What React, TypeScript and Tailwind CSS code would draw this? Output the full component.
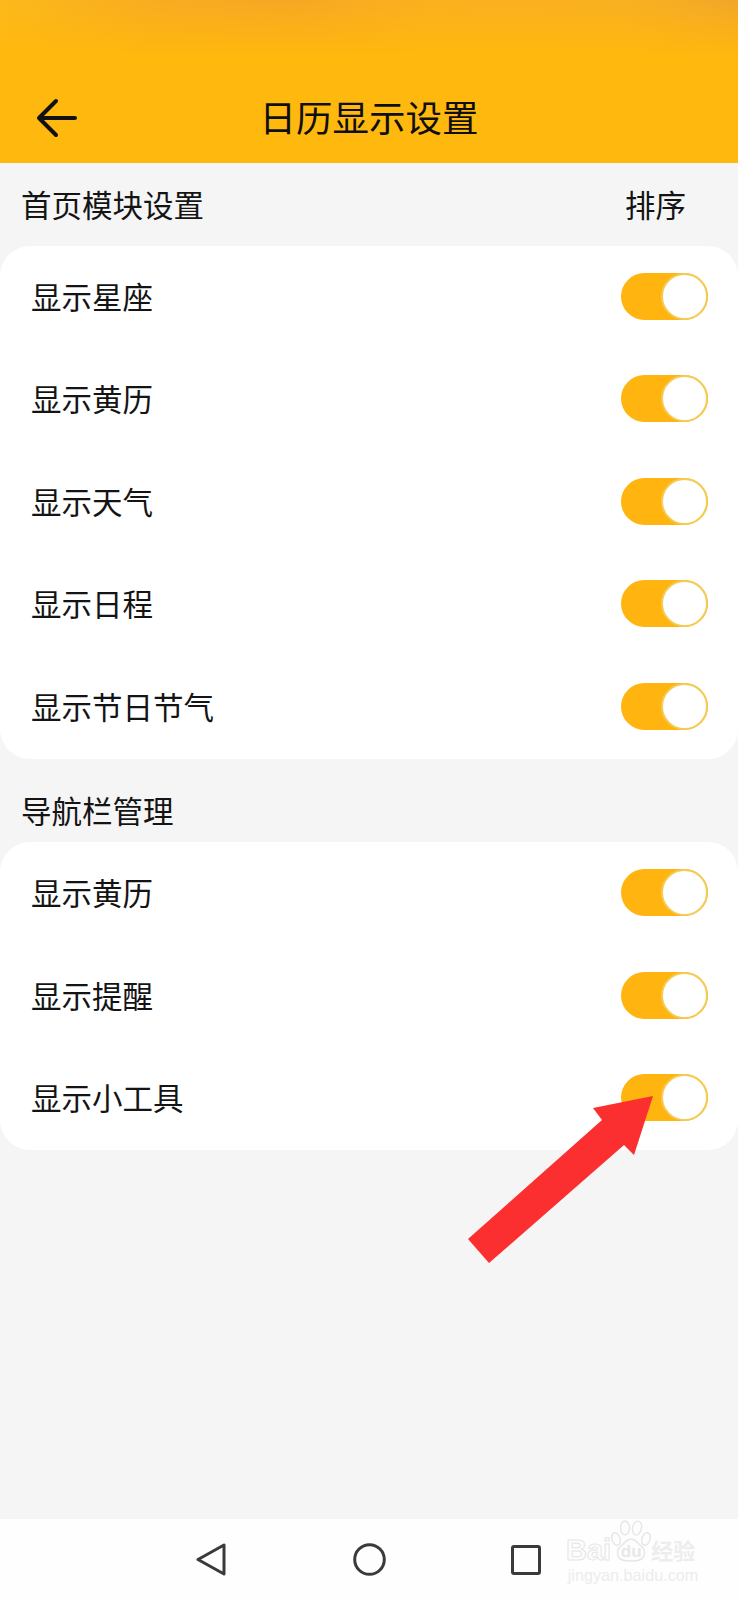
const FONT = "font-['Noto_Sans_CJK_SC','Noto_Sans',sans-serif]";

function Toggle() {
  return (
    <div className="mb-[2px] flex h-[47px] w-[87px] shrink-0 justify-end rounded-full bg-[#ffb40f]">
      <div className="size-[47px] rounded-full border-2 border-[#f3cb55] bg-white" />
    </div>
  );
}

function Card({ items, className = "" }: { items: string[]; className?: string }) {
  return (
    <div className={`rounded-[30px] bg-white ${className}`}>
      {items.map((t, i) => (
        <div key={i} className="flex h-[102.5px] items-center justify-between pl-[31px] pr-[30px]">
          <span className="mb-[3px] text-[30.5px] leading-none text-[#141414]">{t}</span>
          <Toggle />
        </div>
      ))}
    </div>
  );
}

function Watermark() {
  return (
    <div className="absolute left-[566px] top-[1520px] flex w-[134px] flex-col items-center">
      <div className="flex h-[42px] w-full items-end whitespace-nowrap">
        <span className="shrink-0 font-['Liberation_Sans',sans-serif] text-[29px] font-bold leading-[24px] text-[#fdfdfd] [-webkit-text-stroke:1px_#e6e6e6]">
          Bai
        </span>
        <div className="relative h-[42px] w-[40px] shrink-0">
          <svg width="40" height="42" viewBox="0 0 40 42" fill="#fdfdfd" stroke="#e6e6e6" strokeWidth="1.4">
            <ellipse cx="5" cy="19" rx="4" ry="6.5" transform="rotate(-18 5 19)" />
            <ellipse cx="14" cy="8" rx="4.5" ry="7" />
            <ellipse cx="26" cy="8" rx="4.5" ry="7" transform="rotate(12 26 8)" />
            <ellipse cx="35" cy="19" rx="4" ry="6.5" transform="rotate(18 35 19)" />
            <path d="M20 19c5 0 6 4 10 7 4 3 4 7 3 10-1 4-6 5-13 5S8 40 7 36c-1-3-1-7 3-10 4-3 5-7 10-7z" />
          </svg>
          <span className="absolute inset-x-0 top-[23px] text-center font-['Liberation_Sans',sans-serif] text-[17px] font-bold leading-[17px] text-[#e8e8e8]">
            du
          </span>
        </div>
        <span className="shrink-0 text-[22px] font-bold leading-[26px] text-[#ededed]">经验</span>
      </div>
      <div className="mt-[5px] whitespace-nowrap font-['Liberation_Sans',sans-serif] text-[16.2px] leading-[16px] text-[#ececec]">
        jingyan.baidu.com
      </div>
    </div>
  );
}

export default function App() {
  return (
    <div className={`relative flex h-[1600px] w-[738px] flex-col overflow-hidden bg-[#f5f5f5] ${FONT}`}>
      <header className="relative h-[163px] shrink-0 bg-[#ffb80d]">
        <div className="h-[56px] bg-[linear-gradient(90deg,#fcb91a,#f8ab22_22%,#f7a724_40%,#fbb01f_58%,#f9b022_85%,#f2a62a)]">
          <div className="h-full bg-gradient-to-b from-transparent to-[#ffb80d]" />
        </div>
        <svg
          className="absolute left-[36px] top-[98px]"
          width="42"
          height="40"
          viewBox="0 0 42 40"
          fill="none"
          stroke="#111111"
          strokeWidth="4"
          strokeLinecap="round"
          strokeLinejoin="round"
        >
          <path d="M39 20H3M20 3 3 20l17 17" />
        </svg>
        <h1 className="absolute left-0 right-0 top-[95px] text-center text-[36.5px] font-normal leading-[44px] text-[#0f0f0f]">
          日历显示设置
        </h1>
      </header>

      <main className="flex-1">
        <div className="flex h-[83px] items-center justify-between pb-[1px] pl-[21px] pr-[52px] text-[30.5px] leading-none text-[#141414]">
          <span>首页模块设置</span>
          <span>排序</span>
        </div>
        <Card items={["显示星座", "显示黄历", "显示天气", "显示日程", "显示节日节气"]} />
        <div className="flex h-[83px] items-center pl-[21px] pt-[20px] text-[30.5px] leading-none text-[#141414]">
          导航栏管理
        </div>
        <Card className="pt-[1px]" items={["显示黄历", "显示提醒", "显示小工具"]} />
      </main>

      <nav className="flex h-[81px] shrink-0 items-center bg-[#fefefe]">
        <svg className="ml-[196px]" width="30" height="33" viewBox="0 0 30 33" fill="none" stroke="#3a3a3a" strokeWidth="3" strokeLinejoin="round">
          <path d="M2 16.5 28 2v29z" />
        </svg>
        <svg className="ml-[127px]" width="33" height="33" viewBox="0 0 33 33" fill="none" stroke="#3a3a3a" strokeWidth="3">
          <circle cx="16.5" cy="16.5" r="14.8" />
        </svg>
        <svg className="ml-[125px]" width="30" height="30" viewBox="0 0 30 30" fill="none" stroke="#3a3a3a" strokeWidth="3" strokeLinejoin="round">
          <rect x="1.5" y="1.5" width="27" height="27" rx="1.5" />
        </svg>
      </nav>

      <Watermark />

      <svg className="absolute left-[460px] top-[1090px]" width="200" height="180" viewBox="460 1090 200 180">
        <path d="M653 1096 593 1108 602 1120 468 1239 489 1263 624 1145 634 1155z" fill="#fb2e30" />
      </svg>
    </div>
  );
}
